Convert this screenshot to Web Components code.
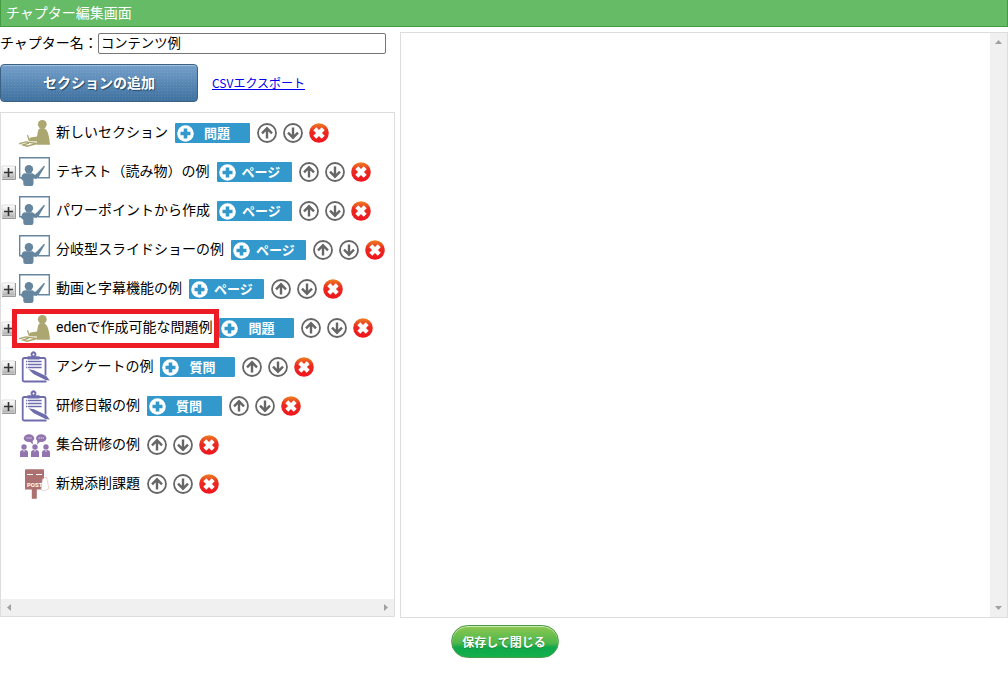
<!DOCTYPE html>
<html lang="ja">
<head>
<meta charset="utf-8">
<title>チャプター編集画面</title>
<style>
body{margin:0;background:#fff;color:#000;font:14px/20px "Noto Sans CJK JP",sans-serif}
</style>
</head>
<body>
<chapter-editor></chapter-editor>
<script>
const FONT='"Noto Sans CJK JP",sans-serif';
function define(name,html,setup){
  const t=document.createElement('template');
  t.innerHTML='<style>*{box-sizing:border-box}button{font-family:'+FONT+';cursor:pointer}</style>'+html;
  customElements.define(name,class extends HTMLElement{
    connectedCallback(){
      if(this.shadowRoot)return;
      const r=this.attachShadow({mode:'open'});
      r.append(t.content.cloneNode(true));
      if(setup)setup(this,r);
    }
  });
}

const ICONS={
question:`<g fill="#aca670"><circle cx="24.300" cy="7.300" r="4.400"/><path d="M22 11.300L26 11Q29 12.300 30 16L31.300 21.500L32 27.700H18.800L19 24.600L12 24.200Q10.300 23.500 10.800 22.300L12.500 20.600L19 19.500L20 14Q20.500 11.800 22 11.300Z"/><path d="M8.800 18.300L10 18L12 23L11 24.500Z"/></g><path d="M1.200 26.700L8 24.900L19 26.500L9 29.200L5 28L11 26" fill="none" stroke="#aca670" stroke-width="1.400"/>`,
page:`<path d="M6 21.800H1.700V1.700H31.300V21.700H20" fill="none" stroke="#66859e" stroke-width="1.400"/><path d="M3 22.700L4 19.300Q5 17.300 7 17.300H14.500L17 19L19.300 17L26 9.800L27 10.600L22.500 18L20.700 21.300L18.500 22.900L15.500 22.600V27.500Q15.300 30 13.500 30H7.500Q5.300 30 5.300 28V25Z" fill="#66859e"/><circle cx="10.900" cy="13.300" r="4.200" fill="#66859e"/>`,
survey:`<path d="M28.500 30.500H6.500Q4.700 30.500 4.700 28.700V8.800Q4.700 7 6.500 7H26Q27.500 7 27.500 8.800V24.500" fill="none" stroke="#6f6cae" stroke-width="1.800"/><path d="M9.500 8.500V5.300h4a2.800 2.800 0 1 1 4 0h4V8.500z" fill="#6f6cae"/><circle cx="15.500" cy="3.500" r="1" fill="#fff"/><path d="M8 10.500h1.300m.8 0h13.500M8 13.500h1.300m.8 0h13.500M8 16.500h1.300m.8 0h13.500" stroke="#6f6cae" stroke-width="1.300"/><path d="M10.500 18.200L16 19.200L28.500 25.200L31.800 29.500L27.500 29L15.500 23Z" fill="#6f6cae"/>`,
group:`<g fill="#9275ae"><ellipse cx="11" cy="9.200" rx="5.200" ry="3.900"/><ellipse cx="23.200" cy="9.200" rx="5.200" ry="3.900"/><path d="M11 12l4 3.500-.5-4zM23 12l-4 3.500.5-4z"/><circle cx="6" cy="18" r="2.700"/><path d="M2 28v-4.500q0-2.500 3-2.500h2q3 0 3 2.500v4.500z"/><circle cx="17" cy="18" r="2.700"/><path d="M13 28v-4.500q0-2.500 3-2.500h2q3 0 3 2.500v4.500z"/><circle cx="28" cy="18" r="2.700"/><path d="M24 28v-4.500q0-2.500 3-2.500h2q3 0 3 2.500v4.500z"/></g><path d="M8.500 9h1m1 0h1m1 0h1M20.700 9h1m1 0h1m1 0h1" stroke="#fff"/><path d="M5.200 21.200h1.600l-.8 2zM16.200 21.200h1.600l-.8 2zM27.200 21.200h1.600l-.8 2z" fill="#fff"/>`,
post:`<path d="M8 1.300h17q1 0 1 1V21.500h-7.200v9.200h-5v-9.200H7V2.300q0-1 1-1z" fill="#ab706f"/><path d="M9 6.500h6m3 0h6" stroke="#fff" stroke-width="1.200"/><path d="M24.500 11L28.500 9L31 20.500L26 23L23 21.500Z" fill="#fff" stroke="#d9b8b6" stroke-width=".6"/><text x="9" y="19" fill="#fff" style="font:bold 6px Roboto,sans-serif">POST</text>`
};
define('section-icon',`<style>:host{display:block;width:32px;height:32px;flex:none}svg{display:block}</style><svg width="32" height="32" viewBox="0 0 32 32" aria-hidden="true"></svg>`,
  (h,r)=>{r.querySelector('svg').innerHTML=ICONS[h.getAttribute('kind')]});

define('add-button',`<style>
:host{display:block;flex:none}
button{display:flex;align-items:center;width:75px;height:20px;margin:0;padding:0 0 0 2px;border:0;border-radius:1px;background:#39c;color:#fff;font-size:13px;line-height:20px;font-weight:700}
svg{flex:none;margin-right:6px}span{min-width:34px;text-align:center;white-space:nowrap}
</style><button type="button"><svg width="17" height="17" viewBox="0 0 17 17" aria-hidden="true"><circle cx="8.500" cy="8.500" r="8.300" fill="#fff"/><path d="M8.500 3.500v10M3.500 8.500h10" stroke="#39c" stroke-width="3.600"/></svg><span><slot></slot></span></button>`);

const ACTIONS={
up:['上へ移動','<circle cx="10" cy="10" r="9" fill="#fff" stroke="#666" stroke-width="1.800"/><path d="M10 15.500V6M5 10.300l5-5 5 5" fill="none" stroke="#666" stroke-width="2.400"/>'],
down:['下へ移動','<circle cx="10" cy="10" r="9" fill="#fff" stroke="#666" stroke-width="1.800"/><path d="M10 4.500V14M5 9.700l5 5 5-5" fill="none" stroke="#666" stroke-width="2.400"/>'],
remove:['削除','<defs><linearGradient id="g" x2="0" y2="1"><stop stop-color="#f08020"/><stop offset=".4" stop-color="#ea2c20"/><stop offset="1" stop-color="#f0141e"/></linearGradient></defs><circle cx="10" cy="10" r="9.800" fill="url(#g)"/><path d="M5.800 5.800l8.400 8.400M14.200 5.800l-8.400 8.400" stroke="#fff" stroke-width="4.200"/>']
};
define('row-action',`<style>:host{display:block;flex:none}button{display:block;width:20px;height:20px;padding:0;border:0;background:none}svg{display:block}</style><button type="button"><svg width="20" height="20" viewBox="0 0 20 20"></svg></button>`,
  (h,r)=>{const [label,art]=ACTIONS[h.getAttribute('action')];r.querySelector('button').setAttribute('aria-label',label);r.querySelector('svg').innerHTML=art});

define('section-row',`<style>
:host{display:flex;align-items:center;height:39px;padding-top:1px;position:relative;white-space:nowrap}
.fold{width:17px;flex:none}
.fold button{display:block;width:15px;height:15px;padding:0;border:0;background:none}
.fold svg{display:block}
:host(:not([expandable])) .fold button{display:none}
.label{display:flex;align-items:center;gap:6px;margin-right:7px;position:relative}
.name{line-height:20px;padding-bottom:2px;font-family:Roboto,${FONT}}
:host([marked]) .label::after{content:"";position:absolute;top:-3px;bottom:-4px;left:-6px;right:-7px;border:5px solid #ed1c24;pointer-events:none}
add-button{margin-right:7px}
.actions{display:flex;gap:6px}
</style>
<div class="fold"><button type="button" aria-label="展開"><svg width="15" height="15" viewBox="0 0 15 15"><defs><linearGradient id="f" x2="0" y2="1"><stop stop-color="#fff"/><stop offset=".4" stop-color="#e8e8e8"/><stop offset="1" stop-color="#aaa"/></linearGradient></defs><path d="M1 1h13v13H1z" fill="url(#f)" stroke="#ddd"/><path d="M14.500 1v13.500H1" fill="none" stroke="#999"/><path d="M7.500 3v9M3 7.500h9" stroke="#333" stroke-width="1.600"/></svg></button></div>
<div class="label"><section-icon></section-icon><span class="name"><slot></slot></span></div>
<add-button></add-button>
<div class="actions"><row-action action="up"></row-action><row-action action="down"></row-action><row-action action="remove"></row-action></div>`,
  (h,r)=>{
    const kind=h.getAttribute('kind');
    const icon=document.createElement('section-icon');icon.setAttribute('kind',kind);
    r.querySelector('section-icon').replaceWith(icon);
    const text={question:'問題',page:'ページ',survey:'質問'}[kind],add=r.querySelector('add-button');
    if(text)add.textContent=text;else add.remove();
  });

define('scroll-track',`<style>
:host{display:flex;justify-content:space-between;align-items:center;background:#f0f0f0;flex:none}
:host([vertical]){flex-direction:column;width:17px;padding:7px 0}
:host(:not([vertical])){height:17px;padding:0 6px}
svg{display:block;fill:#a0a0a0}
.v{display:none}:host([vertical]) .v{display:block}:host([vertical]) .h{display:none}
</style>
<svg class="h" width="4" height="7"><path d="M4 0v7L0 3.500z"/></svg><svg class="h" width="4" height="7"><path d="M0 0v7l4-3.500z"/></svg>
<svg class="v" width="7" height="4"><path d="M0 4h7L3.500 0z"/></svg><svg class="v" width="7" height="4"><path d="M0 0h7L3.500 4z"/></svg>`);

define('title-bar',`<style>:host{display:block;background:#6b6;border:1px solid #449d44;border-top:0;color:#fff}h1{margin:0;padding:2px 5px 4px;font-size:14px;line-height:20px;font-weight:400}</style><h1><slot></slot></h1>`);

define('chapter-tools',`<style>
:host{display:block}
.name{display:flex;align-items:flex-start;height:26px;margin-bottom:6px;padding-top:1px}
label{line-height:18px;white-space:nowrap}
input{flex:1;min-width:0;height:21px;margin-right:9px;padding:0 2px 2px;border:1px solid #767676;border-radius:2px;font-family:${FONT};color:#000}
.tools{display:flex;align-items:center;gap:14px}
.add{width:198px;height:38px;padding:0 0 2px;border:1px solid #3b6386;border-radius:4px;color:#fff;font-size:14px;line-height:20px;font-weight:700;text-shadow:1px 1px 1px #234565;box-shadow:inset 0 1px #a0bfdb;background:radial-gradient(#ffffff18 1px,transparent 1px) 0 0/3px 3px,linear-gradient(#759fca,#3f719f)}
a{font-size:12px;line-height:20px;color:#00e}
</style>
<div class="name"><label for="n">チャプター名：</label><input id="n" type="text" value="コンテンツ例"></div>
<div class="tools"><button class="add" type="button">セクションの追加</button><a href="#csv">CSVエクスポート</a></div>`);

define('section-list',`<style>:host{display:flex;flex-direction:column;border:1px solid #ddd}.rows{flex:1;overflow:hidden}</style><div class="rows"><slot></slot></div><scroll-track></scroll-track>`);
define('preview-pane',`<style>:host{display:flex;border:1px solid #ddd}.view{flex:1}</style><div class="view"><slot></slot></div><scroll-track vertical></scroll-track>`);
define('save-button',`<style>
:host{display:block}
button{display:block;width:108px;height:33px;padding:0 2px 0 0;border:1px solid #489a48;border-radius:17px;color:#fff;font-size:12px;line-height:20px;font-weight:700;white-space:nowrap;text-shadow:0 1px 1px #28843a;box-shadow:inset 0 1px 1px #d4edb8;background:linear-gradient(#8cc751,#4eb74b 55%,#0da84a 70%,#13b04d)}
</style><button type="button"><slot></slot></button>`);

define('chapter-editor',`<style>
:host{display:flex;flex-direction:column;min-height:100vh}
main{flex:1;display:grid;grid-template-columns:minmax(0,395px) minmax(0,1fr);gap:5px;padding-top:5px}
.side{display:flex;flex-direction:column;gap:10px;padding-bottom:1px}
section-list{flex:1}
footer{display:flex;justify-content:center;padding:7px 0 22px 2px}
</style>
<title-bar>チャプター編集画面</title-bar>
<main>
<div class="side"><chapter-tools></chapter-tools>
<section-list>
<section-row kind="question">新しいセクション</section-row>
<section-row kind="page" expandable>テキスト（読み物）の例</section-row>
<section-row kind="page" expandable>パワーポイントから作成</section-row>
<section-row kind="page">分岐型スライドショーの例</section-row>
<section-row kind="page" expandable>動画と字幕機能の例</section-row>
<section-row kind="question" expandable marked>edenで作成可能な問題例</section-row>
<section-row kind="survey" expandable>アンケートの例</section-row>
<section-row kind="survey" expandable>研修日報の例</section-row>
<section-row kind="group">集合研修の例</section-row>
<section-row kind="post">新規添削課題</section-row>
</section-list></div>
<preview-pane></preview-pane>
</main>
<footer><save-button>保存して閉じる</save-button></footer>`);
</script>
</body>
</html>
